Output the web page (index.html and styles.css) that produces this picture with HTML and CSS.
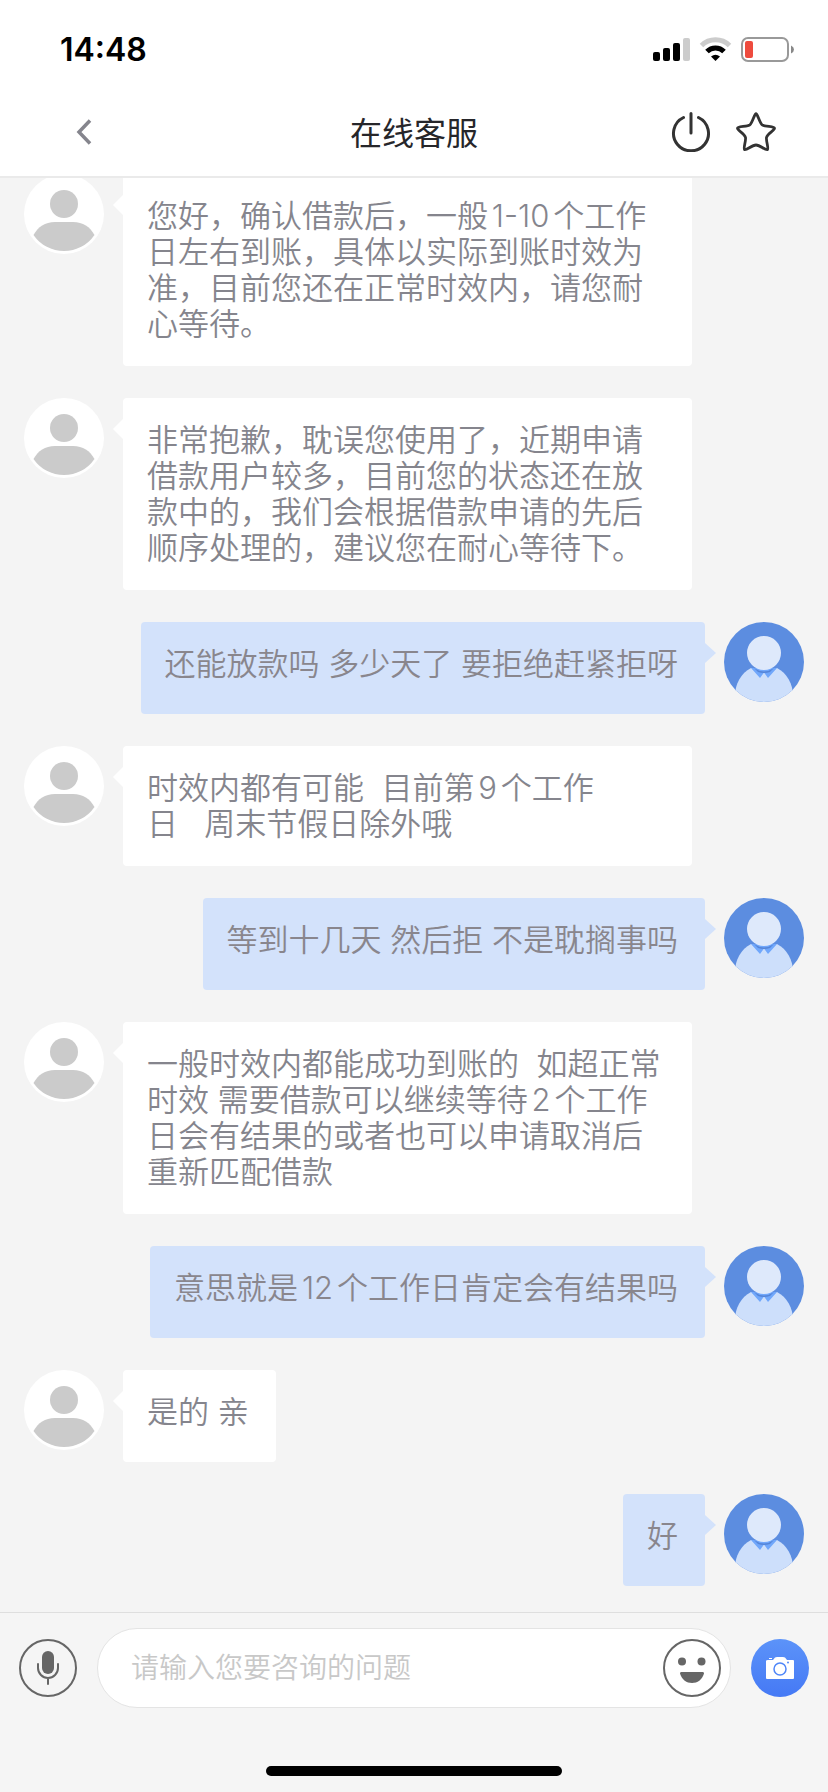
FILE: index.html
```html
<!DOCTYPE html>
<html lang="zh-CN">
<head>
<meta charset="utf-8">
<meta name="viewport" content="width=device-width, initial-scale=1">
<title>在线客服</title>
<link rel="stylesheet" href="styles.css">
</head>
<body>
<svg class="defs" aria-hidden="true">
  <symbol id="agent" viewBox="0 0 80 80">
    <circle cx="40" cy="40" r="40" fill="#fff"/>
    <circle cx="40" cy="30" r="14" fill="#cbcbcb"/>
    <path d="M9.500 61C14 53 21 48 31 48H49C59 48 66 53 70.500 61A37 37 0 0 1 9.500 61Z" fill="#cbcbcb"/>
  </symbol>
  <symbol id="user" viewBox="0 0 80 80">
    <clipPath id="round"><circle cx="40" cy="40" r="40"/></clipPath>
    <g clip-path="url(#round)">
      <rect width="80" height="80" fill="#5c8de0"/>
      <path d="M11 74C11 62 17 51 27 46H53C63 51 69 62 69 74V80H11Z" fill="#cddffb"/>
      <path d="M27 46L36 56L40 50.500L44 56L53 46Z" fill="#70a7fb"/>
      <path d="M30 46Q40 53 50 46L46 50Q40 52 34 50Z" fill="#5585d8"/>
      <circle cx="40" cy="31" r="17" fill="#dee9fb"/>
    </g>
  </symbol>
</svg>
<div class="app">
  <header class="header">
    <div class="status">
      <span class="time">14:48</span>
      <svg class="status-icons" viewBox="0 0 142 26" aria-hidden="true">
        <rect x="0" y="15" width="7" height="9" rx="2"/>
        <rect x="10" y="11" width="7" height="13" rx="2"/>
        <rect x="20" y="6" width="7" height="18" rx="2"/>
        <rect x="30" y="1" width="7" height="23" rx="2" fill="#ccc"/>
        <g fill="none" stroke-width="5">
          <path d="M48.500 8.500A20 20 0 0 1 76.500 8.500" stroke="#ccc"/>
          <path d="M54 14.500A12 12 0 0 1 71 14.500" stroke="#000"/>
        </g>
        <path d="M62.500 24L58 19.500Q62.500 16 67 19.500Z"/>
        <rect x="89" y="1" width="46" height="23" rx="6" fill="none" stroke="#999" stroke-width="2"/>
        <rect x="92" y="4" width="8" height="17" rx="2" fill="#ee4b3e"/>
        <path d="M138 8.500Q141 10 141 12.500T138 16.500Z" fill="#888"/>
      </svg>
    </div>
    <nav class="nav">
      <button class="icon-button" type="button" aria-label="返回">
        <svg class="back-icon" viewBox="0 0 16 26"><path d="M14 1.500L3 13L14 24.500" fill="none" stroke="#85858d" stroke-width="3.500"/></svg>
      </button>
      <h1 class="title">在线客服</h1>
      <div class="actions">
        <button class="icon-button" type="button" aria-label="结束会话">
          <svg class="action-icon" viewBox="0 0 40 40"><path d="M12.500 5.500A17.500 17.500 0 1 0 27.500 5.500M20 1.500V21" fill="none" stroke="#333" stroke-width="3" stroke-linecap="round"/></svg>
        </button>
        <button class="icon-button" type="button" aria-label="评价">
          <svg class="action-icon" viewBox="0 0 40 40"><path d="M20 1.700C21.500 1.700 23.500 10.500 26 12.800C28.500 15 38.500 14 38.500 16.200C38.500 18.500 31.500 21.500 30.500 25.500C29.800 28.500 33 37 31.500 37.600C29 38.500 24.500 33 20 33C15.500 33 11 38.500 8.500 37.600C7 37 10.200 28.500 9.500 25.500C8.500 21.500 1.500 18.500 1.500 16.200C1.500 14 11.500 15 14 12.800C16.500 10.500 18.500 1.700 20 1.700Z" fill="none" stroke="#333" stroke-width="2.800" stroke-linejoin="round"/></svg>
        </button>
      </div>
    </nav>
  </header>

  <main class="chat">
    <div class="message"><svg class="avatar"><use href="#agent"/></svg><p class="bubble">您好，确认借款后，一般1-10个工作日左右到账，具体以实际到账时效为准，目前您还在正常时效内，请您耐心等待。</p></div>
    <div class="message"><svg class="avatar"><use href="#agent"/></svg><p class="bubble">非常抱歉，耽误您使用了，近期申请借款用户较多，目前您的状态还在放款中的，我们会根据借款申请的先后顺序处理的，建议您在耐心等待下。</p></div>
    <div class="message mine"><svg class="avatar"><use href="#user"/></svg><p class="bubble">还能放款吗 多少天了 要拒绝赶紧拒呀</p></div>
    <div class="message"><svg class="avatar"><use href="#agent"/></svg><p class="bubble">时效内都有可能&nbsp; 目前第9个工作日&nbsp;&nbsp;&nbsp;周末节假日除外哦</p></div>
    <div class="message mine"><svg class="avatar"><use href="#user"/></svg><p class="bubble">等到十几天 然后拒 不是耽搁事吗</p></div>
    <div class="message"><svg class="avatar"><use href="#agent"/></svg><p class="bubble">一般时效内都能成功到账的&nbsp; 如超正常时效 需要借款可以继续等待2个工作日会有结果的或者也可以申请取消后重新匹配借款</p></div>
    <div class="message mine"><svg class="avatar"><use href="#user"/></svg><p class="bubble">意思就是12个工作日肯定会有结果吗</p></div>
    <div class="message"><svg class="avatar"><use href="#agent"/></svg><p class="bubble">是的 亲</p></div>
    <div class="message mine"><svg class="avatar"><use href="#user"/></svg><p class="bubble">好</p></div>
  </main>

  <footer class="footer">
    <form class="composer">
      <button class="icon-button" type="button" aria-label="语音输入">
        <svg class="tool-icon" viewBox="0 0 58 58"><circle cx="29" cy="29" r="28" fill="none" stroke="#666" stroke-width="2"/><rect x="23" y="12" width="12" height="23" rx="6" fill="#666"/><path d="M19 25V29A10 10 0 0 0 39 29V25M29 39V45" fill="none" stroke="#666" stroke-width="2" stroke-linecap="round"/></svg>
      </button>
      <div class="field">
        <input class="input" type="text" aria-label="咨询问题" placeholder="请输入您要咨询的问题">
        <button class="icon-button" type="button" aria-label="表情">
          <svg class="tool-icon" viewBox="0 0 58 58"><circle cx="29" cy="29" r="28" fill="none" stroke="#666" stroke-width="2"/><circle cx="19" cy="22.500" r="4" fill="#666"/><circle cx="38.500" cy="22.500" r="4" fill="#666"/><path d="M18 33H40Q41 33 41 34.500C39 41 34.500 44 29 44S19 41 17 34.500Q17 33 18 33Z" fill="#666"/></svg>
        </button>
      </div>
      <button class="icon-button" type="button" aria-label="拍照">
        <svg class="tool-icon" viewBox="0 0 58 58">
          <linearGradient id="blue" x1="0" y1="0" x2="0" y2="1"><stop offset="0" stop-color="#5c93f9"/><stop offset="1" stop-color="#4579f5"/></linearGradient>
          <circle cx="29" cy="29" r="29" fill="url(#blue)"/>
          <path d="M17 21H22L24 18.500Q25 18 26 18H32Q33 18 34 18.500L36 21H42Q43 21 43 22V39Q43 40 42 40H16Q15 40 15 39V22Q15 21 17 21ZM18 19H21V20H18Z" fill="#fff"/>
          <circle cx="29" cy="30" r="6" fill="#fff" stroke="#4f86f8" stroke-width="1.500"/>
          <circle cx="37" cy="23.500" r="1" fill="#5189f8"/>
        </svg>
      </button>
    </form>
    <div class="home-indicator"></div>
  </footer>
</div>
</body>
</html>
```
FILE: styles.css
```css
* {
  box-sizing: border-box;
}

body {
  margin: 0;
  background: #f4f4f4;
  font-family: Inter, "Noto Sans CJK SC", sans-serif;
}

.defs {
  position: absolute;
  width: 0;
  height: 0;
}

.app {
  display: flex;
  flex-direction: column;
  height: 100vh;
}

.header {
  flex: none;
  background: #fff;
  border-bottom: 2px solid #eaeaea;
}

.status {
  display: flex;
  align-items: center;
  justify-content: space-between;
  height: 92px;
  padding: 8px 33px 0 60px;
}

.time {
  font-size: 32px;
  font-weight: 600;
  line-height: 40px;
}

.status-icons {
  width: 142px;
  height: 26px;
}

.nav {
  display: grid;
  grid-template-columns: 1fr auto 1fr;
  align-items: center;
  height: 84px;
  padding: 0 52px 4px 76px;
}

.icon-button {
  display: flex;
  flex: none;
  margin: 0;
  padding: 0;
  border: 0;
  background: none;
}

.back-icon {
  width: 16px;
  height: 26px;
}

.title {
  margin: 0;
  padding: 4px 24px 0 0;
  color: #26262a;
  font-size: 32px;
  font-weight: 400;
  line-height: 40px;
}

.actions {
  display: flex;
  justify-content: flex-end;
  gap: 25px;
}

.action-icon {
  width: 40px;
  height: 40px;
}

.chat {
  display: flex;
  flex: 1;
  flex-direction: column;
  justify-content: flex-end;
  gap: 32px;
  min-height: 0;
  padding: 0 24px 26px;
  overflow: hidden;
}

.message {
  display: flex;
  flex: none;
  align-items: flex-start;
  gap: 19px;
}

.mine {
  flex-direction: row-reverse;
}

.avatar {
  flex: none;
  width: 80px;
  height: 80px;
}

.bubble {
  position: relative;
  min-height: 92px;
  max-width: 73%;
  margin: 0;
  padding: 24px 27px 24px 24px;
  border-radius: 4px;
  background: #fff;
  color: #85858d;
  font-size: 31px;
  font-weight: 350;
  line-height: 36px;
  text-autospace: normal;
}

.bubble::before {
  content: "";
  position: absolute;
  top: 21px;
  right: 100%;
  border: solid transparent;
  border-width: 10px 10px 10px 0;
  border-right-color: #fff;
}

.mine .bubble {
  background: #d3e2fb;
  color: #89868d;
}

.mine .bubble::before {
  right: auto;
  left: 100%;
  border-width: 10px 0 10px 11px;
  border-left-color: #d3e2fb;
}

.footer {
  flex: none;
  padding: 15px 19px 16px;
  border-top: 1px solid #dedede;
  background: #f5f5f5;
}

.composer {
  display: flex;
  align-items: center;
  gap: 20px;
}

.tool-icon {
  width: 58px;
  height: 58px;
}

.field {
  display: flex;
  flex: 1;
  align-items: center;
  min-width: 0;
  height: 80px;
  padding: 0 9px 0 33px;
  border: 1px solid #e4e4e4;
  border-radius: 40px;
  background: #fff;
}

.input {
  flex: 1;
  min-width: 0;
  height: 48px;
  padding: 0;
  border: 0;
  outline: 0;
  background: none;
  color: #333;
  font-family: inherit;
  font-size: 28px;
  font-weight: 350;
}

.input::placeholder {
  color: #c8c8c8;
  opacity: 1;
}

.home-indicator {
  width: 296px;
  height: 10px;
  margin: 58px auto 0;
  border-radius: 5px;
  background: #000;
}
```
